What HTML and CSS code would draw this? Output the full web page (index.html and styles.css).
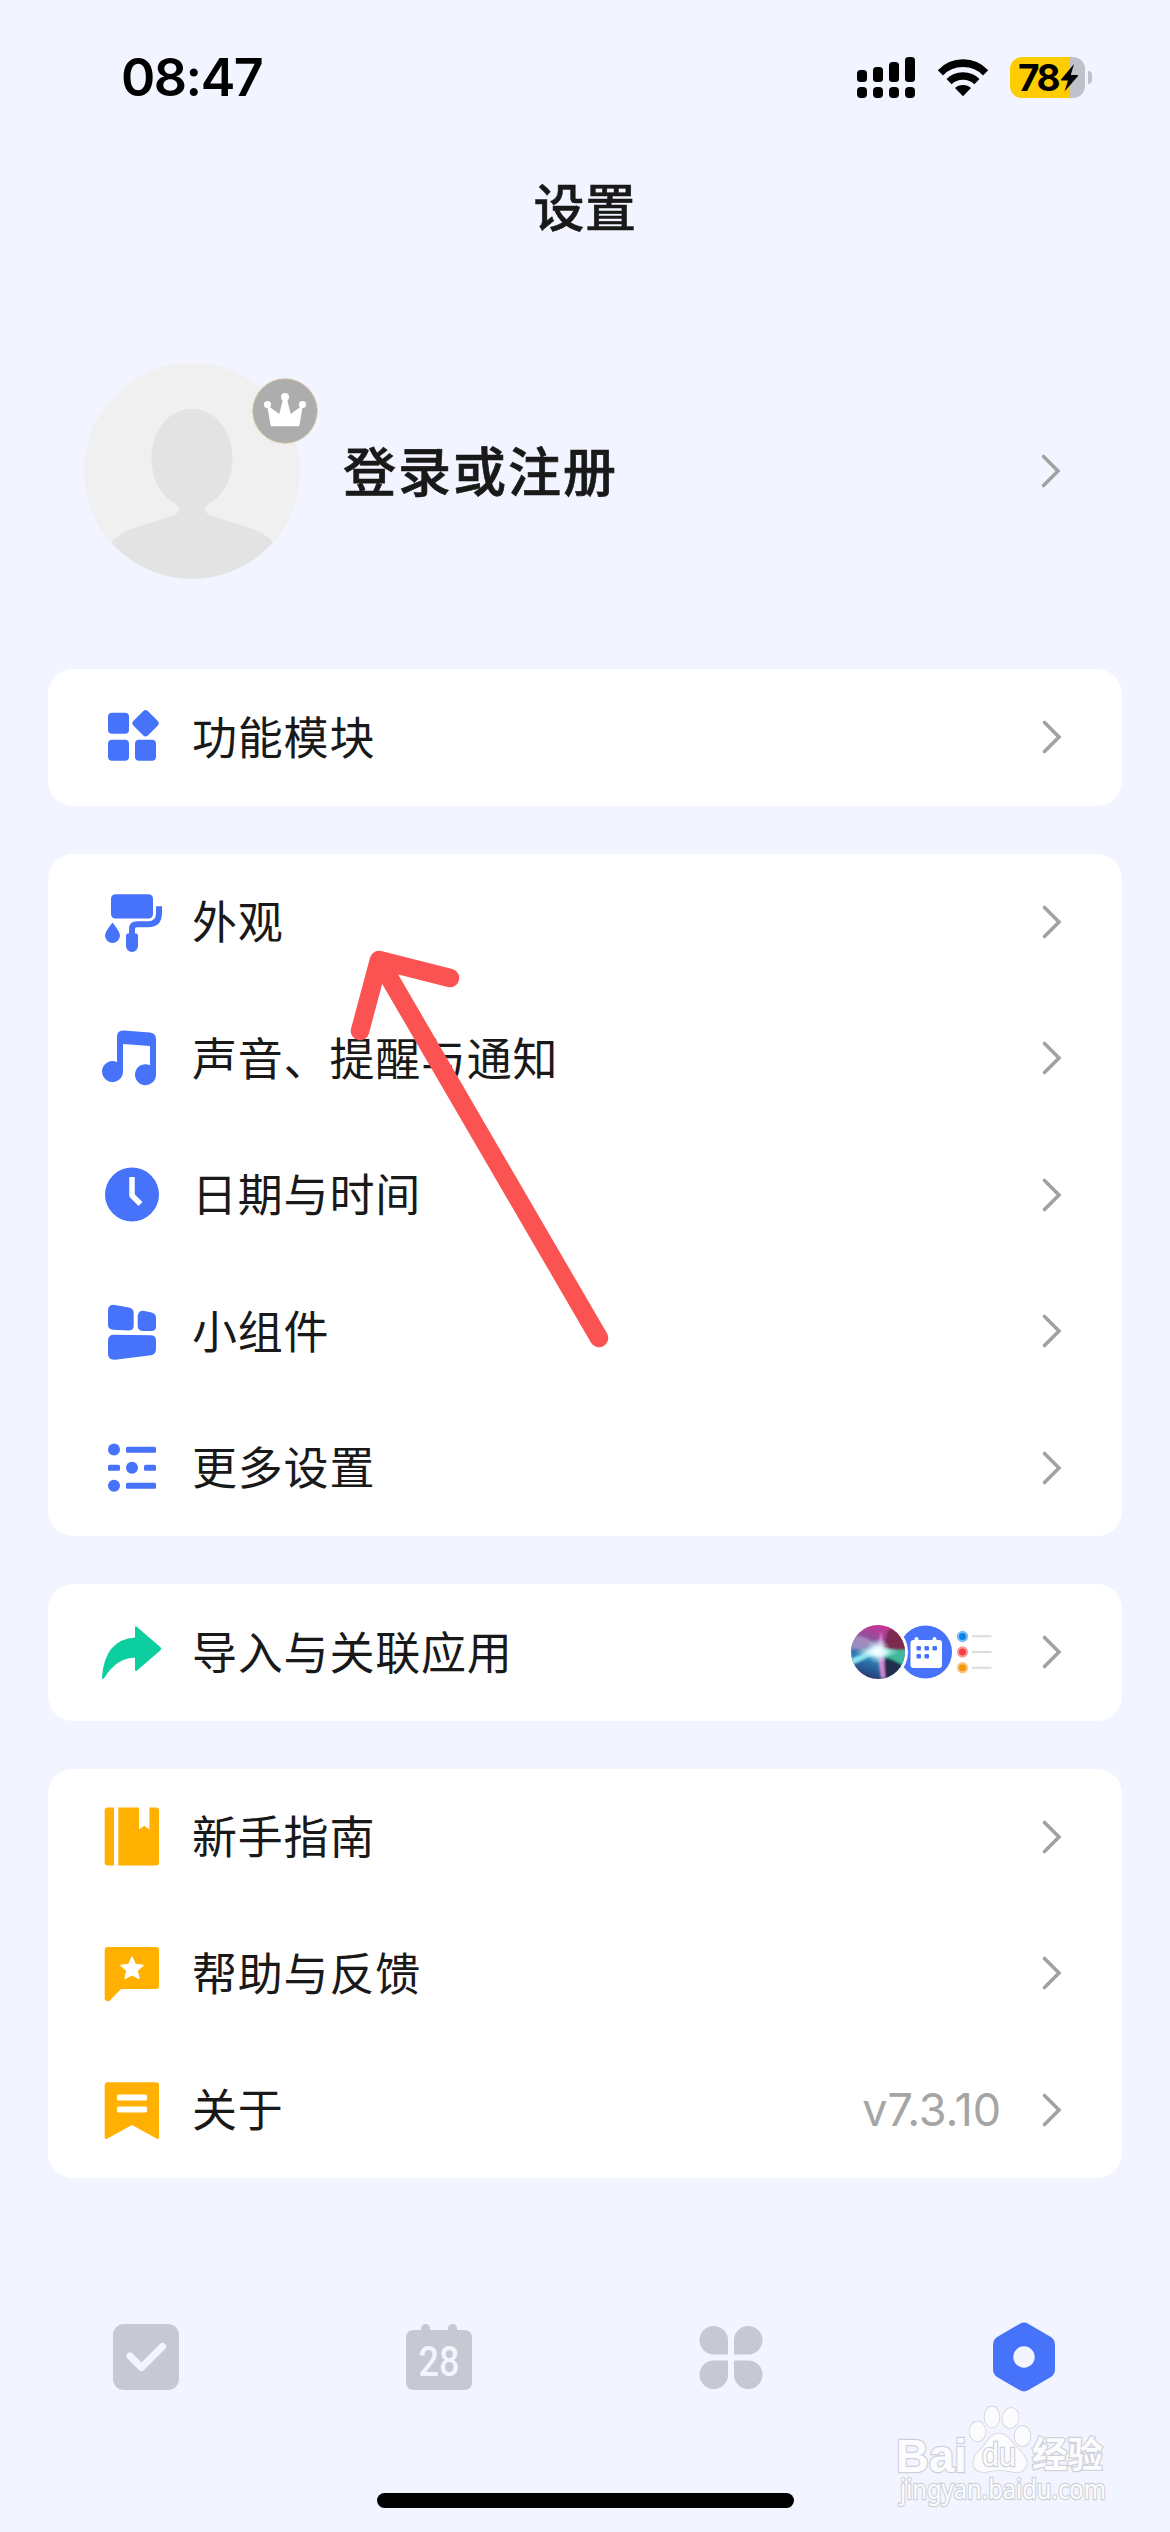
FILE: index.html
```html
<!DOCTYPE html>
<html lang="zh-CN">
<head>
<meta charset="utf-8">
<title>设置</title>
<link rel="stylesheet" href="styles.css">
</head>
<body>
<svg class="defs" width="0" height="0">
  <symbol id="chevron" viewBox="0 0 22 36"><path d="M3.500 3.500 18 18 3.500 32.500" fill="none" stroke="#a2a2a2" stroke-width="3.600" stroke-linecap="round" stroke-linejoin="miter"/></symbol>
</svg>
<div class="screen">
  <header class="status">
    <span class="time">08:47</span>
    <div class="status-icons">
      <svg class="signal" width="58" height="41" viewBox="0 0 58 41">
        <rect x="0" y="13" width="10" height="12" rx="3.500"/><rect x="16" y="10" width="10" height="15" rx="3.500"/><rect x="32" y="5" width="10" height="20" rx="3.500"/><rect x="48" y="0" width="10" height="25" rx="3.500"/>
        <rect x="0" y="30" width="10" height="11" rx="4"/><rect x="16" y="30" width="10" height="11" rx="4"/><rect x="32" y="30" width="10" height="11" rx="4"/><rect x="48" y="30" width="10" height="11" rx="4"/>
      </svg>
      <svg class="wifi" width="52" height="41" viewBox="0 0 52 41">
        <path d="M.8 13.200Q11 2.200 26 2.200T51.200 13.200L46 18.500Q38.500 10 26 10T6 18.500Z"/>
        <path d="M9.500 22Q16 15.200 26 15.200T42.500 22L37.300 27.200Q33 22.700 26 22.700T14.700 27.200Z"/>
        <path d="M18 31Q21 28 26 28T34 31L26 39.300Z"/>
      </svg>
      <div class="battery">
        <div class="battery-body"><span>78</span>
          <svg width="19" height="28" viewBox="0 0 19 28"><path d="M14 0 1 15.500Q.5 16.500 1.700 16.600H8L4.500 27.500 18 12Q18.600 11 17.300 10.900H10.800Z"/></svg>
        </div>
        <div class="battery-nub"></div>
      </div>
    </div>
  </header>
  <h1 class="title">设置</h1>

  <section class="profile">
    <div class="avatar">
      <svg width="216" height="216" viewBox="0 0 216 216">
        <clipPath id="round"><circle cx="108" cy="108" r="108"/></clipPath>
        <g clip-path="url(#round)"><rect width="216" height="216" fill="#f0f0f0"/>
        <path d="M108 46C131 46 148.500 67 148.500 95 148.500 116 140 130 129 138Q120.500 143 120.500 146Q121 151 131 154L163 164Q183 170 190 181V216H26V181Q34 170 53 164L85 154Q95 151 95.500 146Q95.500 143 87 138C76 130 67.500 116 67.500 95 67.500 67 85 46 108 46Z" fill="#e3e3e3"/></g>
      </svg>
      <svg class="crown" width="66" height="66" viewBox="0 0 66 66">
        <circle cx="33" cy="33" r="32.300" fill="#adadad" stroke="#d9c69b" stroke-width=".8"/>
        <g fill="#fff"><circle cx="33" cy="19" r="4"/><circle cx="15.500" cy="26.500" r="3.600"/><circle cx="50.500" cy="26.500" r="3.600"/>
        <path d="M15 27 27.300 36 31 21H35L38.700 36 51 27 47.200 48.300H18.800Z"/></g>
      </svg>
    </div>
    <span class="login">登录或注册</span>
    <svg class="chev"><use href="#chevron"/></svg>
  </section>

  <main class="cards">
    <section class="card">
      <div class="row">
        <svg class="icon blue" viewBox="0 0 72 72"><rect x="12" y="11.700" width="21" height="21" rx="4"/><rect x="12" y="38.700" width="21" height="21" rx="4"/><rect x="39" y="38.700" width="21" height="21" rx="4"/><rect x="39.300" y="12" width="20.500" height="20.500" rx="3.500" transform="rotate(45 49.500 22.300)"/></svg>
        <span class="label">功能模块</span><svg class="chev"><use href="#chevron"/></svg>
      </div>
    </section>

    <section class="card">
      <div class="row">
        <svg class="icon blue" viewBox="0 0 72 72"><rect x="15" y="8.300" width="42" height="24.300" rx="4.500"/><path d="M63 20.300V27Q63 38.200 52 38.200H41Q36 38.200 36 43V50" fill="none" stroke="#4772fa" stroke-width="6"/><path d="M32 47.500H40Q42 47.500 42 49.500V60A6 6 0 0 1 30 60V49.500Q30 47.500 32 47.500ZM16.500 36.500Q24 46 24 49.500A7.500 7.500 0 0 1 9 49.500Q9 46 16.500 36.500Z"/></svg>
        <span class="label">外观</span><svg class="chev"><use href="#chevron"/></svg>
      </div>
      <div class="row">
        <svg class="icon blue" viewBox="0 0 72 72"><path d="M21 40V14.500Q21 8.300 27.500 8.500L54 10.400Q60 11 60 17V53A10.500 10.500 0 1 1 54 43.200V24L27 22V49A10.500 10.500 0 1 1 21 40Z"/></svg>
        <span class="label">声音、提醒与通知</span><svg class="chev"><use href="#chevron"/></svg>
      </div>
      <div class="row">
        <svg class="icon blue" viewBox="0 0 72 72"><circle cx="36" cy="35.500" r="27"/><path d="M36 18V36.500L44.500 45" fill="none" stroke="#fff" stroke-width="5.500" stroke-linejoin="round"/></svg>
        <span class="label">日期与时间</span><svg class="chev"><use href="#chevron"/></svg>
      </div>
      <div class="row">
        <svg class="icon blue" viewBox="0 0 72 72"><path d="M18.800 9.900 33 12.500Q37.700 13.500 37.700 18V30.500Q37.700 35.500 33 35.400L17 34.800Q12 34.500 12 29.500V15.500Q12 9.300 18.800 9.900ZM48.500 16 55.500 17.500Q60 18.700 60 23V31.500Q60 36 55 36H46.500Q41.700 35.700 41.700 31V21.500Q42 15 48.500 16ZM18 39.800 54.500 40.200Q60 40.300 60 45.500V54Q60 59.500 55 60.300L19 64.700Q12 65.300 12 58.500V45.500Q12 39.800 18 39.800Z"/></svg>
        <span class="label">小组件</span><svg class="chev"><use href="#chevron"/></svg>
      </div>
      <div class="row">
        <svg class="icon blue" viewBox="0 0 72 72"><circle cx="18" cy="17.600" r="6"/><rect x="30" y="14.700" width="30" height="6" rx="1.500"/><rect x="12" y="32.800" width="12" height="6" rx="1.500"/><circle cx="36" cy="35.800" r="6"/><rect x="48" y="32.800" width="12" height="6" rx="1.500"/><circle cx="18" cy="53.700" r="6"/><rect x="30" y="50.700" width="30" height="6" rx="1.500"/></svg>
        <span class="label">更多设置</span><svg class="chev"><use href="#chevron"/></svg>
      </div>
    </section>

    <section class="card">
      <div class="row">
        <svg class="icon" viewBox="0 0 72 72"><path d="M39 11.500Q39.300 9.500 41 11L64.500 31.300Q66 32.800 64.500 34.300L41 54.500Q39.300 55.800 39 54V41.700Q21 41.500 8.500 61.500Q6.300 64.500 6 61.500Q8.500 23.500 39 21.400Z" fill="#0dce9e"/></svg>
        <span class="label">导入与关联应用</span>
        <svg class="apps" width="142" height="56" viewBox="0 0 142 56">
          <defs>
            <linearGradient id="orb" x1=".6" y1="0" x2=".3" y2="1"><stop offset="0" stop-color="#cf2f92"/><stop offset=".35" stop-color="#84589f"/><stop offset=".65" stop-color="#2b7fb4"/><stop offset="1" stop-color="#26306e"/></linearGradient>
            <radialGradient id="glow"><stop offset="0" stop-color="#fff"/><stop offset=".35" stop-color="#e4fcff" stop-opacity=".9"/><stop offset="1" stop-color="#9fe8ee" stop-opacity="0"/></radialGradient>
            <filter id="soft" x="-20%" y="-20%" width="140%" height="140%"><feGaussianBlur stdDeviation="1"/></filter>
            <clipPath id="orbclip"><circle cx="28" cy="28" r="27"/></clipPath>
          </defs>
          <circle cx="75.500" cy="28" r="26.500" fill="#4772fa"/>
          <circle cx="28" cy="28" r="30" fill="#fff"/>
          <g clip-path="url(#orbclip)">
            <rect width="56" height="56" fill="url(#orb)"/>
            <g filter="url(#soft)">
              <path d="M33 26 38 6 50 2 60 26Z" fill="#7d2c50"/>
              <path d="M30 30 58 36V58H36Z" fill="#222f4e"/>
              <path d="M1 13Q20 9 29 27L2 25Z" fill="#b39bcb" opacity=".7"/>
              <path d="M28 29 0 42V35L24 25Z" fill="#8fe3ef"/>
              <path d="M29 25 56 26V29L54 42Q43 35 29 31Z" fill="#3fb99b"/>
              <path d="M27 27 31 7 34 27 35 54H31Z" fill="#f394e0" opacity=".85"/>
            </g>
            <ellipse cx="27" cy="28" rx="22" ry="6" fill="url(#glow)"/>
            <circle cx="28" cy="27" r="13" fill="url(#glow)"/>
          </g>
          <path d="M66.500 13Q68.500 13 68.500 15V16H82.500V15Q82.500 13 84.500 13T86.500 15V16H89Q92 16 92 19V41Q92 44 89 44H63.500Q60.500 44 60.500 41V19Q60.500 16 63.500 16H64.500V15Q64.500 13 66.500 13Z" fill="#fff"/>
          <g fill="#4772fa"><rect x="66.500" y="22" width="4.500" height="4.500" rx="1.200"/><rect x="74.500" y="22" width="4.500" height="4.500" rx="1.200"/><rect x="82.500" y="22" width="4.500" height="4.500" rx="1.200"/><rect x="66.500" y="30" width="4.500" height="4.500" rx="1.200"/><rect x="74.500" y="30" width="4.500" height="4.500" rx="1.200"/></g>
          <circle cx="112.500" cy="12.500" r="4.600" fill="#0a84e6" stroke="#7dbdf2" stroke-width="2.200"/><circle cx="112.500" cy="28" r="4.600" fill="#f23f45" stroke="#f99b9d" stroke-width="2.200"/><circle cx="112.500" cy="43.700" r="4.600" fill="#f5980c" stroke="#f9c77d" stroke-width="2.200"/>
          <path d="M122 12.300H141.500M122 28H141.500M122 43.700H141.500" stroke="#dcdcdc" stroke-width="2"/>
        </svg>
        <svg class="chev"><use href="#chevron"/></svg>
      </div>
    </section>

    <section class="card">
      <div class="row">
        <svg class="icon amber" viewBox="0 0 72 72"><path d="M11.700 6.600H18V64.600H11.700Q8.700 64.600 8.700 61.600V9.600Q8.700 6.600 11.700 6.600ZM22.300 6.600H43V28.500L48.200 24.700 53.400 28.500V6.600H60Q63 6.600 63 9.600V61.600Q63 64.600 60 64.600H22.300Z"/></svg>
        <span class="label">新手指南</span><svg class="chev"><use href="#chevron"/></svg>
      </div>
      <div class="row">
        <svg class="icon amber" viewBox="0 0 72 72"><path d="M11.700 10H60Q63 10 63 13V49Q63 52 60 52H25L13.800 63.500Q11 65.500 8.700 62.500V13Q8.700 10 11.700 10Z"/><path d="M36 20 39.300 27.300 47.200 28.300 41.300 33.500 43 41.500 36 38 29 41.500 30.700 33.500 24.800 28.300 32.700 27.300Z" fill="#fff" stroke="#fff" stroke-width="1.200" stroke-linejoin="round"/></svg>
        <span class="label">帮助与反馈</span><svg class="chev"><use href="#chevron"/></svg>
      </div>
      <div class="row">
        <svg class="icon amber" viewBox="0 0 72 72"><path d="M11.700 8.300H60Q63 8.300 63 11.300V63Q63 65.500 61 64.700L36 51 11 64.700Q8.700 65.500 8.700 63V11.300Q8.700 8.300 11.700 8.300Z"/><g fill="#fff"><rect x="21" y="20.400" width="30" height="6.200" rx="1.500"/><rect x="21" y="32.400" width="30" height="6.200" rx="1.500"/></g></svg>
        <span class="label">关于</span><span class="version">v7.3.10</span><svg class="chev"><use href="#chevron"/></svg>
      </div>
    </section>
  </main>

  <nav class="tabs">
    <div class="tab"><svg width="66" height="66" viewBox="0 0 66 66"><rect width="66" height="66" rx="11" fill="#c6c9d1"/><path d="M17 32 28.500 43.500 49.500 22.500" fill="none" stroke="#f2f5ff" stroke-width="7.200" stroke-linecap="round" stroke-linejoin="round"/></svg></div>
    <div class="tab"><svg width="66" height="66" viewBox="0 0 66 66"><path d="M15 4.500A4.500 4.500 0 0 1 24 4.500V6H42V4.500A4.500 4.500 0 0 1 51 4.500V6H58Q66 6 66 14V58Q66 66 58 66H8Q0 66 0 58V14Q0 6 8 6H15Z" fill="#c6c9d1"/><text class="day" x="33" y="51.500" text-anchor="middle" textLength="41" lengthAdjust="spacingAndGlyphs">28</text></svg></div>
    <div class="tab"><svg width="66" height="66" viewBox="0 0 66 66" fill="#c6c9d1"><path d="M30 30.500H16A14.250 14.250 0 1 1 30 16ZM36 30.500H50A14.250 14.250 0 1 0 36 16ZM30 36.500H16A14.250 14.250 0 1 0 30 50ZM36 36.500H50A14.250 14.250 0 1 1 36 50Z"/></svg></div>
    <div class="tab"><svg width="66" height="72" viewBox="0 0 66 72"><path d="M28.500 3Q33 .2 37.500 3L59.500 15.700Q64 18.500 64 24V48Q64 53.500 59.500 56.300L37.500 69Q33 71.800 28.500 69L6.500 56.300Q2 53.500 2 48V24Q2 18.500 6.500 15.700Z" fill="#4772fa"/><circle cx="33" cy="36" r="10.700" fill="#f2f5ff"/></svg></div>
  </nav>
  <div class="home-bar"></div>

  <svg class="pointer" width="280" height="420" viewBox="0 0 280 420"><path d="M249 398 29 20 100 38M29 20 10 91" fill="none" stroke="#fb5352" stroke-width="18.500" stroke-linecap="round" stroke-linejoin="round"/></svg>

  <svg class="watermark" width="230" height="120" viewBox="0 0 230 120">
    <g class="mark">
      <text class="wm-bai" x="5" y="73" textLength="71" lengthAdjust="spacingAndGlyphs">Bai</text>
      <ellipse cx="86.500" cy="32.500" rx="8" ry="10"/><ellipse cx="101" cy="18" rx="7.500" ry="10.500"/><ellipse cx="119.500" cy="19" rx="8" ry="10" transform="rotate(12 119.500 19)"/><ellipse cx="131.500" cy="37" rx="8" ry="10"/>
      <path d="M108 34.500Q114 34.500 119 41L129 52Q139 62 134 69Q130 75 120 72.500Q108 70 97 72.500Q85 75 82.500 66Q81 59 90 50Q94 46 98 40Q102 34.500 108 34.500Z"/>
      <text class="wm-du" x="91" y="67" textLength="34" lengthAdjust="spacingAndGlyphs">du</text>
      <text class="wm-cn" x="141" y="69" textLength="71" lengthAdjust="spacingAndGlyphs">经验</text>
      <text class="wm-url" x="9" y="100" textLength="206" lengthAdjust="spacingAndGlyphs">jingyan.baidu.com</text>
    </g>
  </svg>
</div>
</body>
</html>
```
FILE: styles.css
```css
* { box-sizing: border-box; }
body { margin: 0; background: #f2f5ff; }
.defs { display: block; position: absolute; }
.screen {
  position: relative;
  display: flex;
  flex-direction: column;
  width: 1170px;
  height: 2532px;
  overflow: hidden;
  background: #f2f5ff;
  color: #191919;
  font-family: Inter, "Noto Sans CJK SC", sans-serif;
}
.screen svg { flex: none; display: block; }

.status {
  display: flex;
  align-items: center;
  justify-content: space-between;
  height: 155px;
  padding: 0 78px 0 121px;
  color: #000;
}
.time { padding-top: 1px; font-size: 52px; font-weight: 600; line-height: 60px; letter-spacing: -1.5px; }
.status-icons { display: flex; align-items: center; }
.wifi { margin: 0 21px 0 22px; }
.battery { display: flex; align-items: center; gap: 3px; }
.battery-body {
  display: flex;
  align-items: center;
  width: 75px;
  height: 41px;
  padding-left: 8px;
  border-radius: 12px;
  background: linear-gradient(90deg, #ffcc01 59px, #c0c2cb 59px);
}
.battery-body span { width: 42px; font-size: 37px; font-weight: 700; line-height: 41px; letter-spacing: -2.5px; }
.battery-nub { width: 4px; height: 13px; border-radius: 0 4px 4px 0; background: #c0c2cb; }

.title {
  height: 106px;
  margin: 0;
  font: 500 51px/100px "Noto Sans CJK SC", sans-serif;
  -webkit-text-stroke: .5px;
  letter-spacing: .5px;
  text-align: center;
}

.profile {
  display: flex;
  align-items: center;
  height: 216px;
  margin: 102px 108px 90px 84px;
}
.avatar { position: relative; width: 216px; height: 216px; }
.crown { position: absolute; left: 168px; top: 15px; }
.login {
  flex: 1;
  margin-left: 43px;
  padding-bottom: 4px;
  font: 500 53px/72px "Noto Sans CJK SC", sans-serif;
  -webkit-text-stroke: .7px;
  letter-spacing: 2px;
}
.chev { width: 22px; height: 36px; }

.cards { display: flex; flex-direction: column; gap: 48px; padding: 0 48px; }
.card { border-radius: 25px; background: #fff; }
.row { display: flex; align-items: center; height: 136.5px; padding: 0 59px 0 48px; }
.icon { width: 72px; height: 72px; }
.blue { fill: #4772fa; }
.amber { fill: #ffb000; }
.label {
  flex: 1;
  margin-left: 24px;
  padding-bottom: 3px;
  font: 400 45px/66px "Noto Sans CJK SC", sans-serif;
  letter-spacing: .8px;
}
.apps { margin-right: 49px; }
.version { margin-right: 40px; color: #a5a5a5; font-size: 45px; line-height: 60px; letter-spacing: -.1px; }

.tabs { display: grid; grid-template-columns: repeat(4, 1fr); height: 137px; margin-top: 110px; }
.tab { display: flex; align-items: center; justify-content: center; }
.day { fill: #f2f5ff; font: 500 43px Roboto, sans-serif; }
.home-bar { align-self: center; width: 417px; height: 15px; margin-top: 68px; border-radius: 8px; background: #000; }

.pointer { position: absolute; left: 350px; top: 940px; }
.watermark { position: absolute; left: 891px; top: 2399px; overflow: visible; }
.mark { fill: #fcfcff; stroke: #cfd1d9; stroke-width: 1.5px; paint-order: stroke; }
.mark text { stroke-width: 2.5px; }
.wm-bai { font: 700 47px "Liberation Sans", sans-serif; }
.wm-du { font: 400 33px "Liberation Sans", sans-serif; }
.wm-cn { font: 700 36px "Noto Sans CJK SC", sans-serif; }
.wm-url { font: 400 27px "Noto Sans", sans-serif; }
```
